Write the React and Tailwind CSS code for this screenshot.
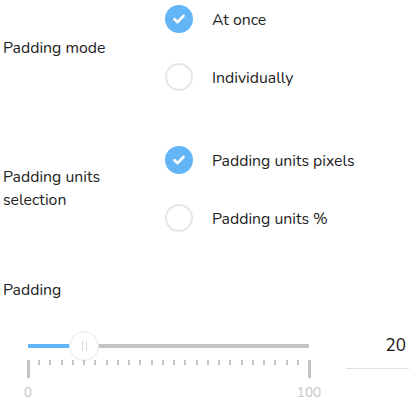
import React from 'react';

const Radio = ({ checked, label }) => (
    <div className="flex items-center h-[38px]">
        {checked ? (
            <div className="w-[28px] h-[28px] rounded-full bg-[#64b5f6] flex items-center justify-center">
                <svg width="14" height="14" viewBox="0 0 14 14">
                    <path d="M2.5 7.2 L5.6 10.2 L11.5 3.8" fill="none" stroke="#fff" strokeWidth="2.6" strokeLinecap="round" strokeLinejoin="round" />
                </svg>
            </div>
        ) : (
            <div className="w-[28px] h-[28px] rounded-full border-2 border-[#e6e6e6] bg-white" />
        )}
        <span className="ml-[19px] pt-[3px] text-[15.8px] text-[#222]">{label}</span>
    </div>
);

const RadioGroup = ({ label, options }) => (
    <div className="flex items-center">
        <div className="w-[165px] pl-[3px] text-[15.8px] leading-[23px] text-[#222]">{label}</div>
        <div className="flex flex-col gap-[20px]">
            {options.map((o) => (
                <Radio key={o.label} {...o} />
            ))}
        </div>
    </div>
);

const ticks = Array.from({ length: 24 }, (_, i) => (i + 1) * 4);

export default function App() {
    const value = 20;
    return (
        <div className="w-[416px] h-[409px] bg-white overflow-hidden" style={{ fontFamily: 'Nunito, Lato, "Noto Sans", sans-serif' }}>
            <RadioGroup
                label="Padding mode"
                options={[{ checked: true, label: 'At once' }, { checked: false, label: 'Individually' }]}
            />
            <div className="mt-[45px]">
                <RadioGroup
                    label={<>Padding units<br />selection</>}
                    options={[{ checked: true, label: 'Padding units pixels' }, { checked: false, label: 'Padding units %' }]}
                />
            </div>
            <div className="mt-[42px] pl-[3px] text-[15.8px] text-[#222] leading-[22px]">Padding</div>
            <div className="flex mt-[30px]">
                <div className="ml-[28px] w-[281px] relative">
                    <div className="relative h-[30px] flex items-center">
                        <div className="h-[4px] w-full bg-[#c4c4c4]" />
                        <div className="absolute left-0 h-[4px] bg-[#64b5f6]" style={{ width: `${value}%` }} />
                        <div
                            className="absolute w-[30px] h-[30px] -ml-[15px] rounded-full bg-white border border-[#e6e6e6] flex items-center justify-center gap-[3px]"
                            style={{ left: `${value}%` }}
                        >
                            <div className="w-px h-[10px] bg-[#d8d8d8]" />
                            <div className="w-px h-[10px] bg-[#d8d8d8]" />
                        </div>
                    </div>
                    <div className="relative h-[18px] mt-[-1px]">
                        <div className="absolute left-[-1px] top-0 w-[3px] h-[18px] bg-[#c4c4c4]" />
                        <div className="absolute right-[-2px] top-0 w-[3px] h-[18px] bg-[#c4c4c4]" />
                        {ticks.map((t) => (
                            <div key={t} className="absolute top-0 w-[2px] h-[5px] -ml-px bg-[#c4c4c4]" style={{ left: `${t}%` }} />
                        ))}
                    </div>
                    <div className="relative h-[20px] mt-[5px] text-[13.5px] leading-[20px] text-[#c4c4c4]">
                        <span className="absolute left-0 -translate-x-1/2">0</span>
                        <span className="absolute right-0 translate-x-1/2">100</span>
                    </div>
                </div>
                <div className="ml-[37px] w-[63px] pb-[7px] border-b border-[#e0e0e0] self-start">
                    <div className="h-[30px] flex items-center justify-end pr-[3px] text-[17px] text-[#111]">{value}</div>
                </div>
            </div>
        </div>
    );
}
